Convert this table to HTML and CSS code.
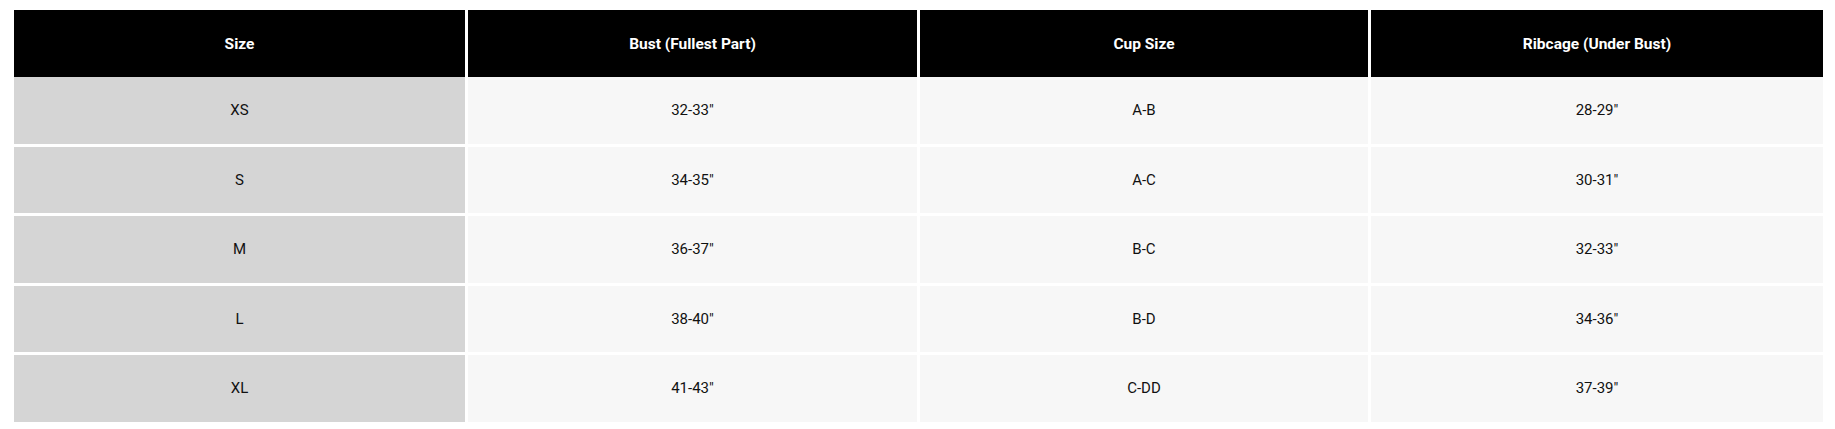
FILE: index.html
```html
<!DOCTYPE html>
<html>
<head>
<meta charset="utf-8">
<link rel="stylesheet" href="styles.css">
</head>
<body>
<div class="wrap">
<table class="size-chart">
  <thead>
    <tr><th class="c1">Size</th><th class="c2">Bust (Fullest Part)</th><th class="c3">Cup Size</th><th class="c4">Ribcage (Under Bust)</th></tr>
  </thead>
  <tbody>
    <tr><td>XS</td><td>32-33"</td><td>A-B</td><td>28-29"</td></tr>
    <tr><td>S</td><td>34-35"</td><td>A-C</td><td>30-31"</td></tr>
    <tr><td>M</td><td>36-37"</td><td>B-C</td><td>32-33"</td></tr>
    <tr><td>L</td><td>38-40"</td><td>B-D</td><td>34-36"</td></tr>
    <tr><td>XL</td><td>41-43"</td><td>C-DD</td><td>37-39"</td></tr>
  </tbody>
</table>
</div>
</body>
</html>
```
FILE: styles.css
```css
html, body {
  margin: 0;
  padding: 0;
  background: #ffffff;
}
.wrap {
  padding: 10px 12px 0 14px;
}
.size-chart {
  width: 1809px;
  border-collapse: separate;
  border-spacing: 0;
  table-layout: fixed;
  font-family: Roboto, "Liberation Sans", sans-serif;
  font-size: 15px;
}
.size-chart th,
.size-chart td {
  box-sizing: border-box;
  text-align: center;
  vertical-align: middle;
  padding: 0;
  border-left: 3px solid #ffffff;
}
.size-chart th:first-child,
.size-chart td:first-child {
  border-left: 0;
}
.size-chart .c1 { width: 451px; }
.size-chart .c2 { width: 452px; }
.size-chart .c3 { width: 451px; }
.size-chart .c4 { width: 455px; }
.size-chart th {
  background: #000000;
  color: #ffffff;
  font-weight: 700;
  font-size: 15.5px;
  height: 67px;
}
.size-chart td {
  background: #f7f7f7;
  color: #111111;
  font-weight: 400;
  height: 66.5px;
}
.size-chart td:first-child {
  background: #d5d5d5;
}
.size-chart tbody tr + tr td {
  border-top: 3px solid #ffffff;
  height: 69.5px;
}
```
